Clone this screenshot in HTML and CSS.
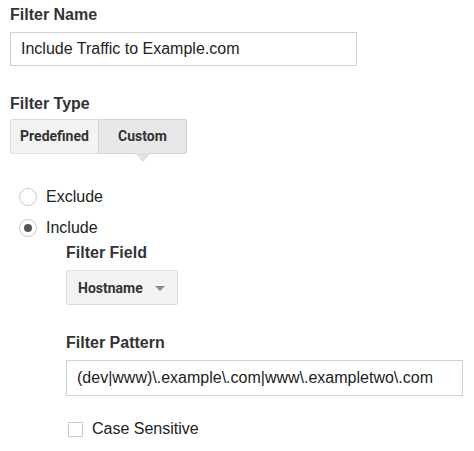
FILE: index.html
```html
<!DOCTYPE html>
<html>
<head>
<meta charset="utf-8">
<link rel="stylesheet" href="styles.css">
</head>
<body>
<div class="form">
  <div class="label">Filter Name</div>
  <div class="input name-input">Include Traffic to Example.com</div>

  <div class="label type-label">Filter Type</div>
  <div class="toggle">
    <div class="tbtn">Predefined</div>
    <div class="tbtn selected">Custom</div>
  </div>

  <div class="radios">
    <div class="radio-row"><span class="radio"></span><span class="rlabel">Exclude</span></div>
    <div class="radio-row"><span class="radio checked"></span><span class="rlabel">Include</span></div>
  </div>

  <div class="sub">
    <div class="label">Filter Field</div>
    <div class="select">Hostname <span class="caret"></span></div>

    <div class="label pattern-label">Filter Pattern</div>
    <div class="input pattern-input">(dev|www)\.example\.com|www\.exampletwo\.com</div>

    <div class="check-row"><span class="checkbox"></span><span class="clabel">Case Sensitive</span></div>
  </div>
</div>
</body>
</html>
```
FILE: styles.css
```css
html, body { margin: 0; padding: 0; background: #fff; }
body { font-family: "Liberation Sans", Arial, sans-serif; color: #222; }
.form { padding: 5px 0 0 10px; }
.label { font-weight: bold; font-size: 16px; color: #333; line-height: 19px; }
.input {
  box-sizing: border-box;
  border: 1px solid #d0d0d0;
  height: 34px;
  font-size: 16px;
  color: #222;
  line-height: 32px;
  padding-left: 10px;
}
.name-input { width: 347px; margin-top: 8px; }
.type-label { margin-top: 28px; }
.toggle { display: flex; margin-top: 6px; position: relative; }
.tbtn {
  font-family: Roboto, sans-serif;
  font-weight: bold;
  font-size: 14px;
  color: #333;
  height: 35px;
  box-sizing: border-box;
  border: 1px solid #dcdcdc;
  background: #f3f3f3;
  line-height: 33px;
  text-align: center;
  position: relative;
}
.tbtn:first-child { width: 89px; border-radius: 2px 0 0 2px; }
.tbtn.selected { width: 89px; margin-left: -1px; background: #e8e8e8; border-color: #d2d2d2; border-radius: 0 2px 2px 0; }
.tbtn.selected::after {
  content: "";
  position: absolute;
  left: 50%;
  bottom: -9px;
  margin-left: -8px;
  border-left: 8px solid transparent;
  border-right: 8px solid transparent;
  border-top: 9px solid #e0e0e0;
}
.radios { margin-top: 27px; padding-left: 9px; }
.radio-row { display: flex; align-items: center; height: 31px; }
.radio {
  width: 18px; height: 18px; box-sizing: border-box;
  border: 1px solid #c8c8c8; border-radius: 50%;
  display: inline-flex; align-items: center; justify-content: center;
  background: #fff;
}
.radio.checked::after { content: ""; width: 8px; height: 8px; border-radius: 50%; background: #555; }
.rlabel { font-size: 16px; color: #222; margin-left: 9px; }
.sub { padding-left: 56px; margin-top: 0; }
.select {
  margin-top: 8px;
  width: 112px; height: 35px; box-sizing: border-box;
  border: 1px solid #dcdcdc; border-radius: 2px;
  background: #f3f3f3;
  font-family: Roboto, sans-serif; font-weight: bold; font-size: 14px; color: #333;
  display: flex; align-items: center; padding-left: 11px; position: relative;
}
.caret {
  position: absolute; right: 12px; top: 15px;
  border-left: 5px solid transparent; border-right: 5px solid transparent;
  border-top: 5px solid #888;
}
.pattern-label { margin-top: 28px; }
.pattern-input { width: 397px; margin-top: 8px; height: 36px; line-height: 34px; }
.check-row { display: flex; align-items: center; margin-top: 24px; padding-left: 2px; }
.checkbox { width: 15px; height: 15px; box-sizing: border-box; border: 1px solid #c8c8c8; border-radius: 1px; }
.clabel { font-size: 16px; color: #222; margin-left: 9px; }
```
